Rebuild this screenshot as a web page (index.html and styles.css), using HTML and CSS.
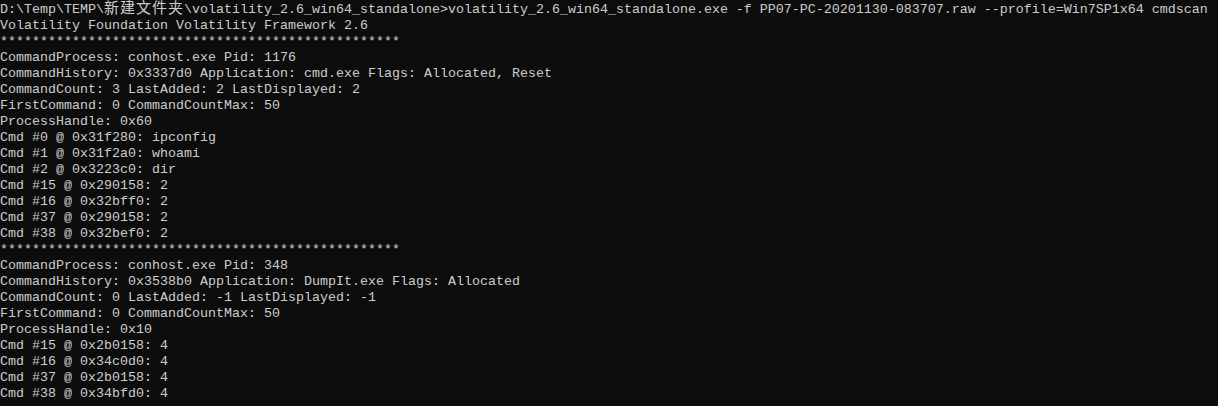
FILE: index.html
```html
<!DOCTYPE html>
<html lang="zh-CN">
<head>
<meta charset="utf-8">
<title>cmd</title>
<link rel="stylesheet" href="styles.css">
</head>
<body>
<pre class="console">D:\Temp\TEMP\<span class="cjk">新建文件夹</span>\volatility_2.6_win64_standalone&gt;volatility_2.6_win64_standalone.exe -f PP07-PC-20201130-083707.raw --profile=Win7SP1x64 cmdscan
Volatility Foundation Volatility Framework 2.6
**************************************************
CommandProcess: conhost.exe Pid: 1176
CommandHistory: 0x3337d0 Application: cmd.exe Flags: Allocated, Reset
CommandCount: 3 LastAdded: 2 LastDisplayed: 2
FirstCommand: 0 CommandCountMax: 50
ProcessHandle: 0x60
Cmd #0 @ 0x31f280: ipconfig
Cmd #1 @ 0x31f2a0: whoami
Cmd #2 @ 0x3223c0: dir
Cmd #15 @ 0x290158: 2
Cmd #16 @ 0x32bff0: 2
Cmd #37 @ 0x290158: 2
Cmd #38 @ 0x32bef0: 2
**************************************************
CommandProcess: conhost.exe Pid: 348
CommandHistory: 0x3538b0 Application: DumpIt.exe Flags: Allocated
CommandCount: 0 LastAdded: -1 LastDisplayed: -1
FirstCommand: 0 CommandCountMax: 50
ProcessHandle: 0x10
Cmd #15 @ 0x2b0158: 4
Cmd #16 @ 0x34c0d0: 4
Cmd #37 @ 0x2b0158: 4
Cmd #38 @ 0x34bfd0: 4</pre>
</body>
</html>
```

FILE: styles.css
```css
html, body {
  margin: 0;
  padding: 0;
  background: #0c0c0c;
  height: 100%;
  overflow: hidden;
}

.console {
  margin: 0;
  padding: 0;
  color: #cccccc;
  font-family: "Liberation Mono", "Noto Sans CJK SC", monospace;
  font-size: 13.333px;
  line-height: 16px;
  white-space: pre;
}

.cjk {
  font-family: "Noto Sans CJK SC", sans-serif;
  font-size: 15px;
  letter-spacing: 1px;
  line-height: 14px;
}
```
